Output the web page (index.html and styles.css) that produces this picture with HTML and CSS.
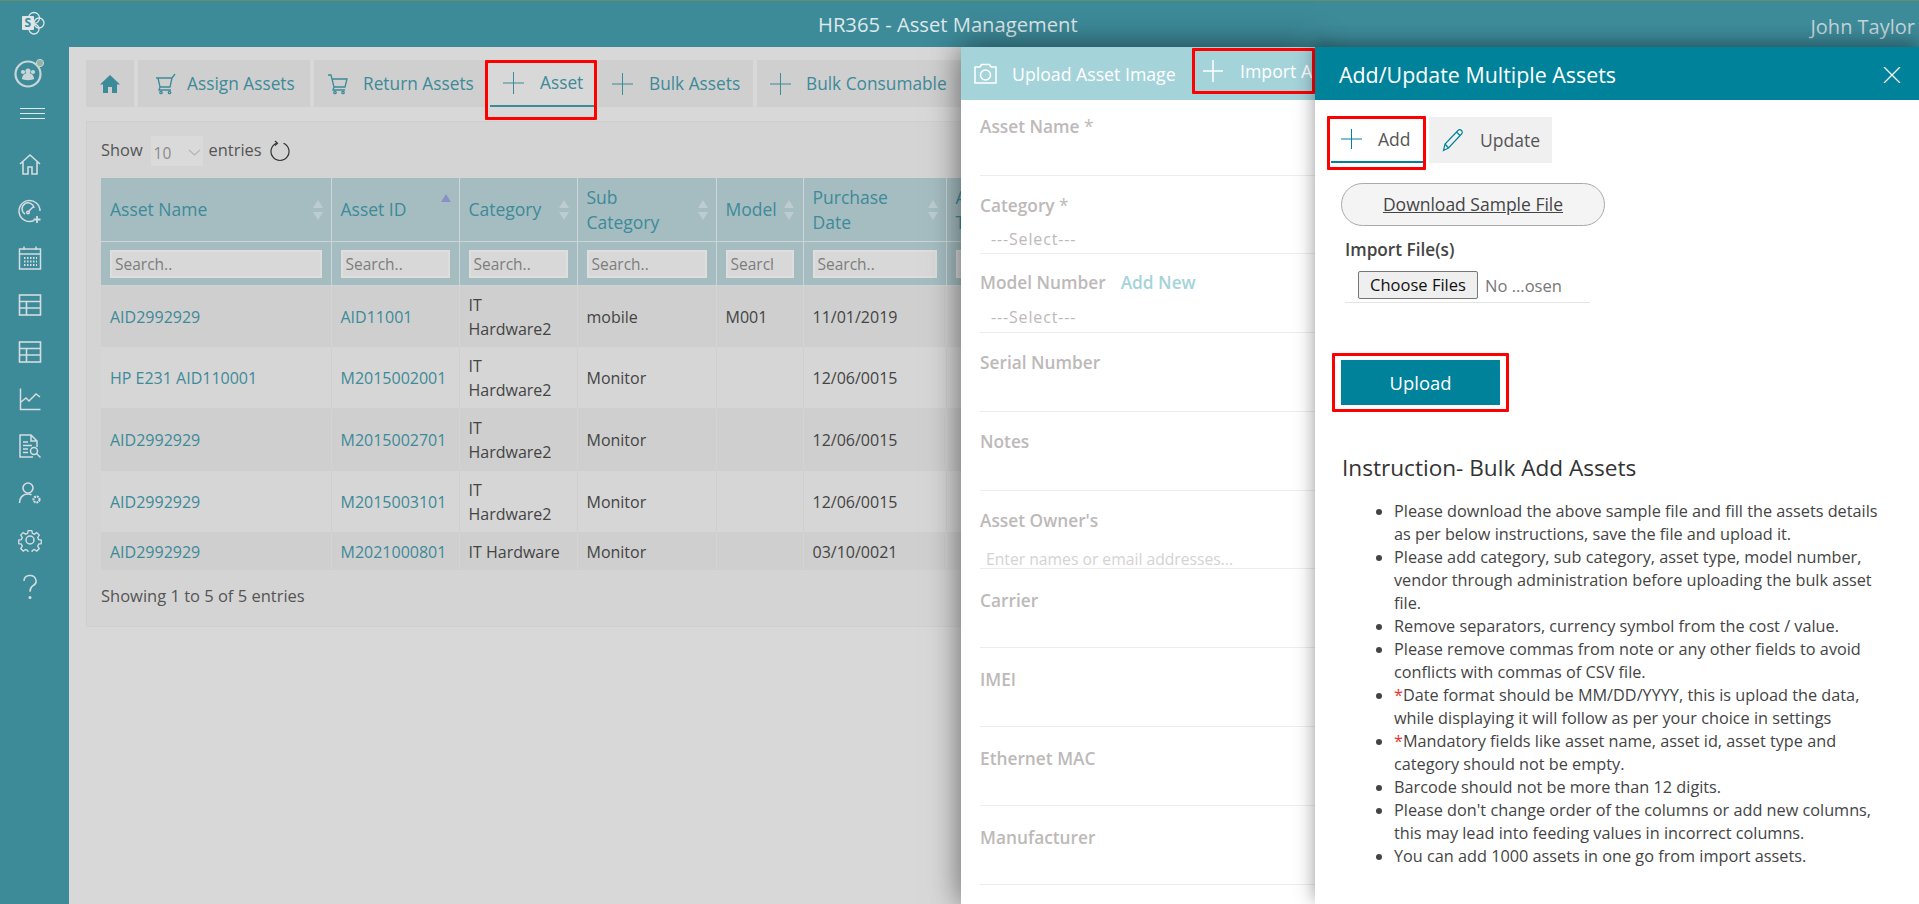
FILE: index.html
```html
<!DOCTYPE html>
<html lang="en">
<head>
<meta charset="utf-8">
<title>HR365 - Asset Management</title>
<link rel="stylesheet" href="styles.css">
</head>
<body>
<div class="app">
  <aside class="sidebar">
    <div class="logo">
      <svg width="24" height="24" viewBox="0 0 24 24" fill="none" stroke="#dfe6e8" stroke-width="1.3"><circle cx="13" cy="7" r="5.5"/><circle cx="18" cy="12" r="5"/><circle cx="13" cy="18" r="5"/><rect x="1" y="5" width="12" height="14" rx="1" fill="#dfe6e8" stroke="none"/><text x="3.500" y="16" class="logo-s">S</text></svg>
    </div>
    <div class="avatar">
      <svg width="32" height="32" viewBox="0 0 32 32" fill="none"><circle cx="14" cy="17" r="12.5" stroke="#c9d6d8" stroke-width="2.2"/><circle cx="14" cy="14" r="2.6" fill="#c9d6d8"/><circle cx="9" cy="15" r="2.1" fill="#c9d6d8"/><circle cx="19" cy="15" r="2.1" fill="#c9d6d8"/><path d="M8 22c0-4 3-6 6-6s6 2 6 6c-2 1.5-10 1.5-12 0z" fill="#c9d6d8"/><circle cx="26" cy="6" r="3.6" fill="#8fb3a4" stroke="#c9d6d8"/></svg>
    </div>
    <div class="burger"><span></span><span></span><span></span></div>
    <nav class="nav">
      <a class="nav-i"><svg width="24" height="24" viewBox="0 0 24 24" fill="none" stroke="#d5dddf" stroke-width="1.6"><path d="M2 12 12 3l10 9M5 10v12h5v-7h4v7h5V10"/></svg></a>
      <a class="nav-i"><svg width="26" height="26" viewBox="0 0 26 26" fill="none" stroke="#d5dddf" stroke-width="1.5"><path d="M17 22.5A10.5 10.5 0 1 1 23 13"/><path d="M8 16a6 6 0 1 1 9-6"/><path d="m11 14 5-5"/><circle cx="11" cy="14.500" r="1.300"/><path d="M20 18v7M16.500 21.500h7" stroke-width="1.800"/></svg></a>
      <a class="nav-i"><svg width="24" height="26" viewBox="0 0 24 26" fill="none" stroke="#d5dddf" stroke-width="1.500"><rect x="1.500" y="4" width="21" height="20"/><path d="M1.500 9h21M6 1.500V5M18 1.500V5"/><path d="M6 13h13M6 16.500h13M6 20h13" stroke-dasharray="1.500 1.500" stroke-width="2"/></svg></a>
      <a class="nav-i"><svg width="24" height="24" viewBox="0 0 24 24" fill="none" stroke="#d5dddf" stroke-width="1.600"><rect x="1.500" y="2" width="21" height="20"/><path d="M1.500 8.500h21M1.500 15h21M8.500 8.500V22"/></svg></a>
      <a class="nav-i"><svg width="24" height="24" viewBox="0 0 24 24" fill="none" stroke="#d5dddf" stroke-width="1.600"><rect x="1.500" y="2" width="21" height="20"/><path d="M1.500 8.500h21M1.500 15h21M8.500 8.500V22"/></svg></a>
      <a class="nav-i"><svg width="24" height="24" viewBox="0 0 24 24" fill="none" stroke="#d5dddf" stroke-width="1.500"><path d="M2.500 1.500v21h20M3 15l5-4 3 3 7-7 4 3"/></svg></a>
      <a class="nav-i"><svg width="24" height="26" viewBox="0 0 24 26" fill="none" stroke="#d5dddf" stroke-width="1.500"><path d="M15 24H2V2h11l6 6v6M13 2v6h6M5 9h5M5 12.500h9M5 16h5M5 19.500h5"/><circle cx="16" cy="18" r="3.500"/><path d="m18.500 20.500 4 4"/></svg></a>
      <a class="nav-i"><svg width="24" height="24" viewBox="0 0 24 24" fill="none" stroke="#d5dddf" stroke-width="1.600"><circle cx="10" cy="7" r="5"/><path d="M1.500 22c0-5 3-9 8.500-9 1.300 0 2.500.2 3.500.7"/><circle cx="18.500" cy="18.500" r="3" stroke-width="2.200" stroke-dasharray="2 .8"/></svg></a>
      <a class="nav-i"><svg width="24" height="24" viewBox="0 0 24 24" fill="none" stroke="#d5dddf" stroke-width="1.500"><circle cx="12" cy="12" r="4"/><path d="M10 1.500h4l.6 3 2.300 1 2.600-1.700 2.800 2.800-1.700 2.600 1 2.300 2.900.6v3.900l-2.900.6-1 2.300 1.700 2.600-2.800 2.800-2.600-1.700-2.300 1-.6 2.900h-4l-.6-2.900-2.300-1-2.600 1.700-2.800-2.800 1.700-2.600-1-2.300-2.900-.6v-3.900l2.900-.6 1-2.300L1.700 6.600 4.500 3.800l2.600 1.700 2.300-1z" transform="translate(1.200 1.200) scale(.9)"/></svg></a>
      <a class="nav-i"><svg width="16" height="26" viewBox="0 0 16 26" fill="none" stroke="#d5dddf" stroke-width="1.500"><path d="M2 7a6 5.500 0 1 1 9 4.700c-2 1.300-3 2.800-3 6"/><circle cx="8" cy="23.500" r=".8"/></svg></a>
    </nav>
  </aside>
  <div class="right">
    <header class="topbar">
      <div class="app-title">HR365 - Asset Management</div>
      <div class="user">John Taylor</div>
    </header>
    <main class="main">
      <div class="toolbar">
        <a class="tool tool-home"><svg width="20" height="20" viewBox="0 0 20 20" fill="#3d8a99"><path d="M10 1 0 10.500h3V19h5v-6h4v6h5v-8.500h3z"/></svg></a>
        <a class="tool tool-assign"><svg class="ic" width="22" height="22" viewBox="0 0 22 22" fill="none" stroke="#3d8a99" stroke-width="1.300"><path d="M1 5h16l3-4M17 5l-2 9H5L3 5M5 14l-1 3h12"/><circle cx="6" cy="19.500" r="1.200"/><circle cx="14.500" cy="19.500" r="1.200"/></svg>Assign Assets</a>
        <a class="tool tool-return"><svg class="ic" width="22" height="22" viewBox="0 0 22 22" fill="none" stroke="#3d8a99" stroke-width="1.300"><path d="M1 2h3l3 12h11l2-8H5M7 14l-1 3h12"/><circle cx="8" cy="19.500" r="1.200"/><circle cx="16" cy="19.500" r="1.200"/></svg>Return Assets</a>
        <a class="tool tool-active"><svg class="ic" width="21" height="22" viewBox="0 0 21 22" stroke="#3d8a99"><path d="M10.500 0v22M0 11h21"/></svg>Asset<span class="hl hl-asset"></span></a>
        <a class="tool tool-bulk"><svg class="ic" width="21" height="22" viewBox="0 0 21 22" stroke="#3d8a99"><path d="M10.500 0v22M0 11h21"/></svg>Bulk Assets</a>
        <a class="tool tool-cons"><svg class="ic" width="21" height="22" viewBox="0 0 21 22" stroke="#3d8a99"><path d="M10.500 0v22M0 11h21"/></svg>Bulk Consumable</a>
      </div>
      <section class="card">
        <div class="len-row">
          <span>Show</span>
          <span class="len-select"><span>10</span><svg width="13" height="7" viewBox="0 0 13 7" fill="none" stroke="#b5b5b5" stroke-width="1.200"><path d="m1 1 5.500 5L12 1"/></svg></span>
          <span>entries</span>
          <svg class="refresh" width="21" height="22" viewBox="0 0 21 22" fill="none" stroke="#333" stroke-width="1.200"><path d="M13.500 3.200a9 9 0 1 1-7 0"/><path d="M5 1l2.500 2.200L5 5.500"/></svg>
        </div>
        <table class="grid">
          <colgroup><col class="c1"><col class="c2"><col class="c3"><col class="c4"><col class="c5"><col class="c6"><col class="c7"></colgroup>
          <thead>
            <tr class="head">
              <th><div class="thc"><span>Asset Name</span><span class="sort"><i class="up"></i><i class="dn"></i></span></div></th>
              <th><div class="thc"><span>Asset ID</span><span class="sort sort-on"><i class="up"></i></span></div></th>
              <th><div class="thc"><span>Category</span><span class="sort"><i class="up"></i><i class="dn"></i></span></div></th>
              <th><div class="thc"><span>Sub<br>Category</span><span class="sort"><i class="up"></i><i class="dn"></i></span></div></th>
              <th><div class="thc thc-tight"><span>Model</span><span class="sort"><i class="up"></i><i class="dn"></i></span></div></th>
              <th><div class="thc"><span>Purchase<br>Date</span><span class="sort"><i class="up"></i><i class="dn"></i></span></div></th>
              <th><div class="thc"><span>Asset<br>Type</span></div></th>
            </tr>
            <tr class="filters">
              <th><input class="flt" placeholder="Search.."></th>
              <th><input class="flt" placeholder="Search.."></th>
              <th><input class="flt" placeholder="Search.."></th>
              <th><input class="flt" placeholder="Search.."></th>
              <th><input class="flt flt-narrow" placeholder="Search.."></th>
              <th><input class="flt" placeholder="Search.."></th>
              <th><input class="flt" placeholder="Search.."></th>
            </tr>
          </thead>
          <tbody>
            <tr class="r odd r61"><td><a>AID2992929</a></td><td><a>AID11001</a></td><td>IT<br>Hardware2</td><td>mobile</td><td>M001</td><td>11/01/2019</td><td></td></tr>
            <tr class="r r62"><td><a>HP E231 AID110001</a></td><td><a>M2015002001</a></td><td>IT<br>Hardware2</td><td>Monitor</td><td></td><td>12/06/0015</td><td></td></tr>
            <tr class="r odd r62"><td><a>AID2992929</a></td><td><a>M2015002701</a></td><td>IT<br>Hardware2</td><td>Monitor</td><td></td><td>12/06/0015</td><td></td></tr>
            <tr class="r r62"><td><a>AID2992929</a></td><td><a>M2015003101</a></td><td>IT<br>Hardware2</td><td>Monitor</td><td></td><td>12/06/0015</td><td></td></tr>
            <tr class="r odd r37"><td><a>AID2992929</a></td><td><a>M2021000801</a></td><td>IT Hardware</td><td>Monitor</td><td></td><td>03/10/0021</td><td></td></tr>
          </tbody>
        </table>
        <div class="info">Showing 1 to 5 of 5 entries</div>
      </section>
    </main>
  </div>

  <section class="panel-a">
    <div class="pa-head">
      <div class="pa-upload"><svg width="23" height="22" viewBox="0 0 23 22" fill="none" stroke="#fff" stroke-width="1.500"><path d="M1 4h5l1.500-2.500h8L17 4h5v16H1z"/><circle cx="11.500" cy="12" r="5"/></svg><span>Upload Asset Image</span></div>
      <div class="pa-import"><svg width="20" height="22" viewBox="0 0 20 22" stroke="#fff" stroke-width="1.500"><path d="M10 0v22M0 11h20"/></svg><span>Import Assets</span><span class="hl hl-fill"></span></div>
    </div>
    <div class="field f76"><label>Asset Name <em>*</em></label></div>
    <div class="field f78"><label>Category <em>*</em></label><div class="sel">---Select---</div></div>
    <div class="field f79"><label>Model Number<a class="add-new">Add New</a></label><div class="sel sel-2">---Select---</div></div>
    <div class="field"><label>Serial Number</label></div>
    <div class="field"><label>Notes</label></div>
    <div class="field f78-b"><label>Asset Owner's</label><div class="owner">Enter names or email addresses...</div></div>
    <div class="field"><label>Carrier</label></div>
    <div class="field"><label>IMEI</label></div>
    <div class="field"><label>Ethernet MAC</label></div>
    <div class="field"><label>Manufacturer</label></div>
  </section>

  <section class="panel-b">
    <div class="pb-head">
      <h2>Add/Update Multiple Assets</h2>
      <svg width="18" height="16" viewBox="0 0 18 16" fill="none" stroke="#fff" stroke-width="1.300"><path d="m1 0 16 16M17 0 1 16"/></svg>
    </div>
    <div class="pb-body">
      <div class="tabs">
        <a class="tab tab-on"><svg width="21" height="20" viewBox="0 0 21 20" stroke="#00829a"><path d="M10.500 0v20M0 10h21"/></svg>Add<span class="hl hl-add"></span></a>
        <a class="tab"><svg width="22" height="24" viewBox="0 0 22 24" fill="none" stroke="#00829a" stroke-width="1.200"><path d="M1.500 22.500 3 16 16 2.500c1-1 2.500-1 3.500 0s1 2.500 0 3.500L6.500 20zM3 16l3.500 4M14.500 4l3.500 3.500"/></svg>Update</a>
      </div>
      <a class="sample">Download Sample File</a>
      <div class="imp-label">Import File(s)</div>
      <div class="file-row"><button class="choose" type="button">Choose Files</button><span class="no-file">No ...osen</span></div>
      <button class="upload" type="button">Upload<span class="hl hl-upload"></span></button>
      <h3 class="ins-title">Instruction- Bulk Add Assets</h3>
      <ul class="ins">
        <li>Please download the above sample file and fill the assets details as per below instructions, save the file and upload it.</li>
        <li>Please add category, sub category, asset type, model number, vendor through administration before uploading the bulk asset file.</li>
        <li>Remove separators, currency symbol from the cost / value.</li>
        <li>Please remove commas from note or any other fields to avoid conflicts with commas of CSV file.</li>
        <li><span class="req">*</span>Date format should be MM/DD/YYYY, this is upload the data, while displaying it will follow as per your choice in settings</li>
        <li><span class="req">*</span>Mandatory fields like asset name, asset id, asset type and category should not be empty.</li>
        <li>Barcode should not be more than 12 digits.</li>
        <li>Please don't change order of the columns or add new columns, this may lead into feeding values in incorrect columns.</li>
        <li>You can add 1000 assets in one go from import assets.</li>
      </ul>
    </div>
  </section>
</div>
</body>
</html>
```
FILE: styles.css
```css
* { box-sizing: border-box; }
html, body { margin: 0; height: 100%; overflow: hidden; }
body { font-family: "Open Sans", "Liberation Sans", sans-serif; font-size: 16px; color: #3f3f3f; }
a { color: inherit; text-decoration: none; }
.app { position: relative; display: flex; width: 100%; height: 904px; overflow: hidden; background: #d8d8d8; }
.app::before { content: ""; position: absolute; z-index: 5; left: 0; right: 0; top: 0; height: 1px; background: #5f8f6e; }

/* sidebar */
.sidebar { flex: 0 0 69px; background: #3d8a99; display: flex; flex-direction: column; align-items: center; }
.logo { height: 47px; padding-top: 11px; padding-right: 3px; }
.logo-s { font: 700 12px "Open Sans", sans-serif; fill: #3d8a99; stroke: none; }
.avatar { height: 44px; padding-top: 10px; padding-right: 9px; }
.burger { display: flex; flex-direction: column; gap: 4px; width: 25px; margin: 17px 5px 0 0; }
.burger span { height: 1px; background: #e2e9ea; }
.nav { display: flex; flex-direction: column; margin: 21px 9px 0 0; }
.nav-i { height: 47px; display: flex; align-items: center; justify-content: center; }

/* top */
.right { flex: 1; min-width: 0; display: flex; flex-direction: column; }
.topbar { height: 47px; flex: none; background: #3d8a99; color: #dfe8ea; display: flex; justify-content: space-between; align-items: center; padding: 0 4px 0 749px; }
.app-title { font-size: 20.2px; }
.user { font-size: 20px; color: #c4d3d6; padding-top: 5px; }
.main { flex: 1; min-height: 0; background: #d8d8d8; padding: 13px 0 0 17px; }

/* toolbar */
.toolbar { display: flex; gap: 4px; height: 47px; }
.tool { position: relative; display: flex; align-items: center; height: 47px; padding-left: 13px; background: #cfcfcf; color: #3d8a99; font-size: 17.3px; white-space: nowrap; }
.tool .ic { margin-right: 16px; flex: none; }
.tool-home { width: 48px; padding-left: 14px; }
.tool-assign { width: 172px; padding-left: 17px; }
.tool-assign .ic { margin-right: 10px; }
.tool-return { width: 171px; }
.tool-return .ic { margin-right: 14px; }
.tool-active { width: 104px; margin-left: 1px; background: #d8d8d8; border-bottom: 2px solid #3d8a99; }
.tool-bulk { width: 155px; padding-left: 14px; }
.tool-cons { width: 248px; }
.tool-cons .ic { margin-right: 15px; }
.hl { position: absolute; border: 3px solid #f00; border-radius: 1px; pointer-events: none; z-index: 3; }
.hl-asset { left: -5px; right: -3px; top: 0; bottom: -15px; }
.hl-fill { inset: 0; }
.hl-add { left: -4px; right: -3px; top: -1px; bottom: -9px; }
.hl-upload { left: -9px; right: -9px; top: -7px; bottom: -7px; }

/* card */
.card { margin-top: 14px; height: 506px; padding: 14px 0 0 14px; background: #d4d4d4; border: 1px solid #cfcfcf; overflow: hidden; }
.len-row { display: flex; align-items: center; gap: 6px; height: 30px; font-size: 16.4px; color: #555; }
.len-row > span:not(.len-select) { position: relative; top: -2px; }
.len-select { width: 52px; height: 30px; margin-left: 2px; display: flex; align-items: center; justify-content: space-between; padding: 3px 2px 0 3px; background: #dadada; color: #8a8a8a; font-size: 15.5px; }
.refresh { margin-left: 2px; }
.grid { margin-top: 12px; border-collapse: collapse; table-layout: fixed; width: 1050px; }
.c1 { width: 230px; } .c2 { width: 128px; } .c3 { width: 118px; } .c4 { width: 139px; } .c5 { width: 87px; } .c6 { width: 143px; } .c7 { width: 205px; }
.grid th { background: #a5bdc1; border: 1px solid #ccd6d8; border-top: 0; border-left: 0; font-weight: 400; text-align: left; }
.head th { height: 63px; padding-top: 2px; color: #3d8a99; font-size: 17.5px; line-height: 25px; }
.thc { display: flex; align-items: center; justify-content: space-between; padding: 0 7px 0 8px; }
.thc-tight { padding-right: 8px; }
.sort { display: flex; flex-direction: column; gap: 4px; }
.sort i { display: block; width: 0; height: 0; border-left: 5px solid transparent; border-right: 5px solid transparent; }
.sort .up { border-bottom: 8px solid #bccdd0; }
.sort .dn { border-top: 8px solid #bccdd0; }
.sort-on { align-self: flex-start; margin-top: -3px; }
.sort-on .up { border-bottom-color: #8a8fc8; }
.filters th { height: 44px; padding: 2px 9px 0; }
.flt { display: block; width: 100%; height: 28px; padding: 0 3px; background: #d8d8d8; border: 2px solid #dedede; outline: 0; font: 15.5px "Open Sans", sans-serif; color: #777; }
.flt-narrow { padding-right: 19px; }
.flt::placeholder { color: #7d7d7d; opacity: 1; }
.r td { padding: 2px 9px 0; font-size: 16px; line-height: 24px; color: #444; background: #d6d6d6; border: 1px solid #cfcfcf; border-top: 0; border-left: 0; overflow: hidden; white-space: nowrap; }
.r.odd td { background: #cfcfcf; border-right-color: #d4d4d4; }
.r td a { color: #3d8a99; }
.r61 td { height: 61px; } .r62 td { height: 62px; } .r37 td { height: 37px; }
.info { margin-top: 14px; font-size: 16.5px; color: #555; }

/* panel a */
.panel-a { position: absolute; z-index: 6; left: 961px; top: 47px; bottom: 0; width: 354px; background: #fff; overflow: hidden; box-shadow: 0 0 30px rgba(0,0,0,.55); }
.pa-head { height: 53px; background: #a5d3da; display: flex; align-items: center; color: #fff; font-size: 17.7px; }
.pa-upload { display: flex; align-items: center; gap: 15px; width: 231px; padding-left: 13px; white-space: nowrap; }
.pa-import { position: relative; flex: none; width: 123px; height: 46px; margin-top: -5px; display: flex; align-items: center; gap: 17px; padding-left: 11px; overflow: hidden; white-space: nowrap; }
.pa-import svg { flex: none; }
.field { height: 79px; margin-left: 19px; padding-top: 19px; border-bottom: 1px solid #ededed; color: #bdb9b9; }
.f76 { height: 76px; padding-top: 16px; }
.f78 { height: 78px; }
.f79 { padding-top: 18px; }
.f78-b { height: 78px; }
.f78-b ~ .field { padding-top: 21px; }
.field label { display: block; font-weight: 600; font-size: 17.3px; line-height: 22px; white-space: nowrap; }
.field em { font-style: normal; font-weight: 400; }
.add-new { margin-left: 15px; color: #a5d3da; font-weight: 600; }
.sel { margin: 11px 0 0 11px; font-size: 16px; line-height: 22px; letter-spacing: .85px; color: #bdb9b9; }
.sel-2 { margin-top: 12px; }
.owner { margin: 17px 0 0 6px; font-size: 15.7px; line-height: 20px; color: #d5d2d2; }

/* panel b */
.panel-b { position: absolute; z-index: 7; left: 1315px; top: 47px; right: 0; bottom: 0; background: #fff; box-shadow: 0 -6px 14px rgba(0,0,0,.25), -2px 0 22px rgba(0,0,0,.16); }
.pb-head { height: 53px; padding: 2px 18px 0 24px; background: #00829a; color: #fff; display: flex; align-items: center; justify-content: space-between; }
.pb-head h2 { margin: 0; font-size: 21.4px; font-weight: 400; }
.pb-body { padding: 17px 0 0 16px; }
.tabs { display: flex; height: 46px; gap: 6px; }
.tab { position: relative; display: flex; align-items: center; gap: 16px; height: 46px; color: #555; font-size: 17.5px; }
.tab-on { width: 92px; padding-left: 10px; border-bottom: 2px solid #00829a; }
.tab:not(.tab-on) { width: 123px; padding-left: 13px; background: #f0f0f0; }
.sample { display: block; width: 264px; height: 43px; margin: 20px 0 0 10px; border: 1px solid #aaa; border-radius: 22px; background: #f4f4f4; color: #444; text-align: center; line-height: 40px; font-size: 17.5px; text-decoration: underline; }
.imp-label { margin: 13px 0 0 14px; font-weight: 600; font-size: 17.2px; line-height: 22px; color: #444; }
.file-row { width: 245px; height: 32px; margin: 10px 0 0 14px; padding-left: 13px; display: flex; gap: 7px; border-bottom: 1px solid #e4e4e4; color: #777; font-size: 16.5px; }
.choose { width: 120px; height: 28px; padding: 0 0 1px; background: #efefef; border: 1px solid #767676; border-radius: 2px; font: 16.5px "Open Sans", sans-serif; color: #111; }
.no-file { line-height: 29px; }
.upload { position: relative; display: block; width: 159px; height: 45px; margin: 57px 0 0 10px; padding: 0; background: #00829a; border: 0; color: #fff; font: 18.4px "Open Sans", sans-serif; }
.ins-title { margin: 48px 0 0 11px; font-size: 22.6px; line-height: 30px; font-weight: 400; color: #333; }
.ins { margin: 17px 0 0; width: 559px; padding: 0 0 0 63px; list-style: disc; font-size: 16.25px; line-height: 23px; color: #444; }
.req { color: #e33; }
```
